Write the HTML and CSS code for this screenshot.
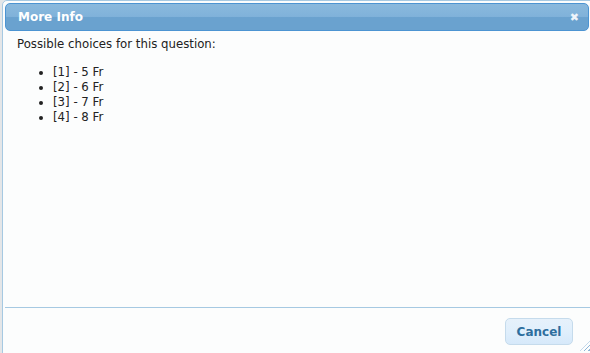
FILE: index.html
```html
<!DOCTYPE html>
<html lang="en">
<head>
    <meta charset="UTF-8">
    <title>More Info</title>
    <link rel="stylesheet" href="styles.css">
</head>
<body>
    <div class="dialog">
        <div class="titlebar">
            <span class="title">More Info</span>
            <span class="close">&#x2716;</span>
        </div>
        <div class="content">
            <p>Possible choices for this question:</p>
            <ul>
                <li>[1] - 5 Fr</li>
                <li>[2] - 6 Fr</li>
                <li>[3] - 7 Fr</li>
                <li>[4] - 8 Fr</li>
            </ul>
        </div>
        <div class="buttonpane">
            <button class="btn">Cancel</button>
        </div>
        <div class="resize"></div>
    </div>
</body>
</html>
```

FILE: styles.css
```css
body {
    margin: 0;
    background: #e4e6e8;
    font-family: "DejaVu Sans", Verdana, sans-serif;
    font-size: 11.75px;
    overflow: hidden;
}

.dialog {
    position: relative;
    margin-left: 2px;
    width: 600px;
    height: 370px;
    box-sizing: border-box;
    padding: 2px;
    border: 1px solid #a6c9e2;
    border-radius: 5px;
    background: #fcfdfd;
    display: flex;
    flex-direction: column;
}

.titlebar {
    height: 28px;
    box-sizing: border-box;
    border: 1px solid #4c94d2;
    border-radius: 5px;
    background: linear-gradient(to bottom, #8ab9dd 0%, #80b2da 48%, #6aa2cf 52%, #6aa2cf 100%);
    display: flex;
    align-items: center;
    justify-content: space-between;
    padding: 0 9px 0 12px;
    width: 584px;
    color: #fff;
}

.title {
    font-weight: bold;
    font-size: 12px;
}

.close {
    font-size: 11px;
    font-weight: bold;
    color: #eef4fa;
}

.content {
    flex: 0 0 276px;
    padding: 0 12px;
    color: #222;
}

.content p {
    margin: 6px 0 0;
    line-height: 15px;
}

.content ul {
    margin: 13px 0 0;
    padding-left: 36px;
}

.content li {
    line-height: 15px;
}

.buttonpane {
    border-top: 1px solid #a6c9e2;
    width: 585px;
    display: flex;
    justify-content: flex-end;
    padding: 10px 17px 0 0;
    box-sizing: border-box;
}

.btn {
    width: 68px;
    height: 27px;
    border: 1px solid #c5dbec;
    border-radius: 5px;
    background: linear-gradient(to bottom, #e6f1fb 0%, #e0effc 50%, #d6e9fa 100%);
    color: #2e6e9e;
    font-family: "DejaVu Sans", Verdana, sans-serif;
    font-weight: bold;
    font-size: 12px;
    padding: 0;
}

.resize {
    position: absolute;
    left: 577px;
    top: 338px;
    width: 12px;
    height: 12px;
    background: repeating-linear-gradient(135deg, transparent 0 2px, #8fb6d8 2px 3px);
    clip-path: polygon(100% 0, 100% 100%, 0 100%);
}
```
